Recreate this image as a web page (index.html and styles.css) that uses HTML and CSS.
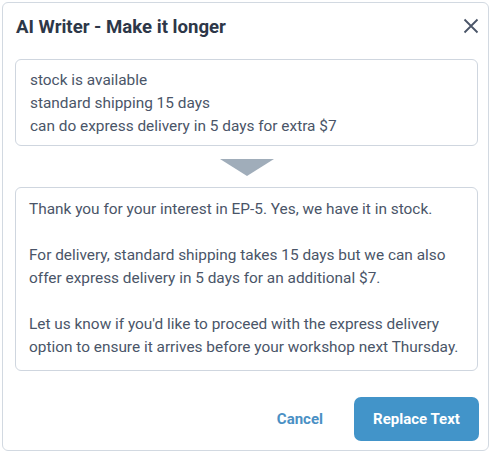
FILE: index.html
```html
<!DOCTYPE html>
<html lang="en">
<head>
<meta charset="utf-8">
<title>AI Writer - Make it longer</title>
<link rel="stylesheet" href="styles.css">
</head>
<body>
<div class="dialog">
  <div class="header">
    <h1 class="title">AI Writer - Make it longer</h1>
    <button class="close" aria-label="Close">
      <svg width="16" height="16" viewBox="0 0 16 16"><path d="M1.5 1.5 L14.5 14.5 M14.5 1.5 L1.5 14.5" stroke="#4a5568" stroke-width="1.8" fill="none"/></svg>
    </button>
  </div>
  <div class="box source">
    <div>stock is available</div>
    <div>standard shipping 15 days</div>
    <div>can do express delivery in 5 days for extra $7</div>
  </div>
  <div class="arrow-row"><div class="arrow"></div></div>
  <div class="box result">
    <p>Thank you for your interest in EP-5. Yes, we have it in stock.</p>
    <p>For delivery, standard shipping takes 15 days but we can also offer express delivery in 5 days for an additional $7.</p>
    <p>Let us know if you'd like to proceed with the express delivery option to ensure it arrives before your workshop next Thursday.</p>
  </div>
  <div class="footer">
    <button class="btn-cancel">Cancel</button>
    <button class="btn-primary">Replace Text</button>
  </div>
</div>
</body>
</html>
```
FILE: styles.css
```css
* { box-sizing: border-box; }
html, body { margin: 0; padding: 0; background: #ffffff; }
body { font-family: Roboto, "Noto Sans", Arial, sans-serif; }
.dialog {
  margin: 2px 0 0 2px;
  width: 487px;
  height: 449px;
  border: 1px solid #d2d9e1;
  border-radius: 6px;
  padding: 0 10px 0 12px;
  display: flex;
  flex-direction: column;
}
.header {
  display: flex;
  justify-content: space-between;
  align-items: flex-start;
  padding-top: 12px;
  height: 56px;
}
.title {
  margin: 0;
  margin-left: 1px;
  font-size: 18.6px;
  line-height: 24px;
  font-weight: 700;
  color: #2d3748;
}
.close {
  border: 0;
  background: none;
  padding: 0;
  margin: 3px -1px 0 0;
  width: 16px;
  height: 16px;
  cursor: pointer;
  display: block;
}
.close svg { display: block; }
.box {
  border: 1px solid #cfd6df;
  border-radius: 6px;
  width: 463px;
  color: #4a5568;
  font-size: 15.4px;
  line-height: 23px;
  padding: 8px 14px;
}
.source { height: 87px; padding: 9px 14px 8px; }
.result { height: 184px; padding: 10px 13px; }
.result p { margin: 0 0 23px 0; }
.result p:last-child { margin-bottom: 0; }
.arrow-row {
  width: 463px;
  display: flex;
  justify-content: center;
  padding: 13px 0 11px;
}
.arrow {
  width: 0;
  height: 0;
  border-left: 27px solid transparent;
  border-right: 27px solid transparent;
  border-top: 17px solid #a0adba;
}
.footer {
  width: 464px;
  display: flex;
  justify-content: flex-end;
  align-items: center;
  gap: 15px;
  margin-top: 26px;
}
.btn-cancel {
  border: 0;
  background: none;
  font-family: inherit;
  font-size: 15px;
  font-weight: 700;
  color: #4a90c4;
  padding: 0 16px;
  height: 44px;
}
.btn-primary {
  border: 0;
  background: #4294c9;
  color: #ffffff;
  font-family: inherit;
  font-size: 15px;
  font-weight: 700;
  width: 125px;
  height: 44px;
  border-radius: 7px;
}
```
